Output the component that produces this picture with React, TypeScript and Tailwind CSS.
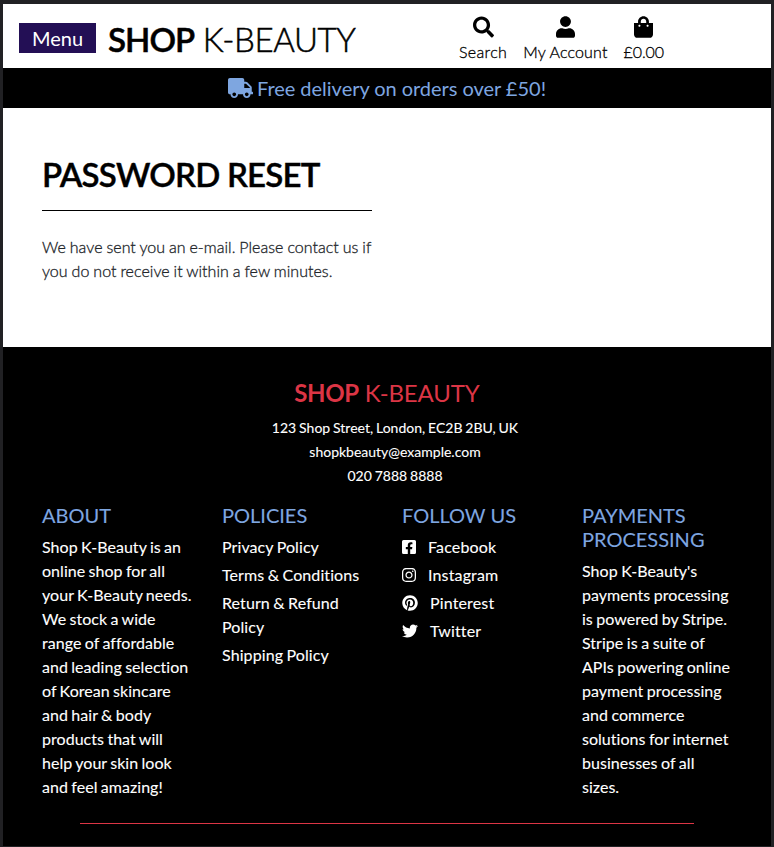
import { FaSearch, FaUser, FaShoppingBag, FaTruck, FaFacebookSquare, FaInstagram, FaPinterest, FaTwitter } from "react-icons/fa";

const policies = ["Privacy Policy", "Terms & Conditions", "Return & Refund Policy", "Shipping Policy"];
const socials = [
  { icon: FaFacebookSquare, label: "Facebook", cls: "w-[14px] mr-3" },
  { icon: FaInstagram, label: "Instagram", cls: "w-[14px] mr-3" },
  { icon: FaPinterest, label: "Pinterest", cls: "w-4 mr-3" },
  { icon: FaTwitter, label: "Twitter", cls: "w-4 mr-3" },
];
const actions = [
  { icon: FaSearch, label: "Search", cls: "w-[21px]", text: "tracking-[0.35px]" },
  { icon: FaUser, label: "My Account", cls: "w-[19px]", text: "tracking-[0.16px]" },
  { icon: FaShoppingBag, label: "£0.00", cls: "w-[19px]", text: "tracking-[-0.1px]" },
];

function Heading({ children }: { children: string }) {
  return <h2 className="mb-2 text-[20px] leading-6 text-[#7ea6e0]">{children}</h2>;
}

export default function App() {
  return (
    <div className="h-[847px] overflow-hidden border-x-[3px] border-t-[4px] border-b border-[#212124] bg-white font-['Lato',sans-serif] text-base leading-6 text-black [font-variant-ligatures:none]">
      <header className="flex h-16 items-start pl-4">
        <button className="mt-[19px] h-[30px] w-[77px] bg-[#230f55] text-[20px] leading-[30px] text-white">Menu</button>
        <h1 className="mt-[15px] ml-3 w-[351px] text-[33px] leading-10 font-light tracking-[-0.4px] whitespace-nowrap [-webkit-text-stroke:0.5px_black]"><b className="font-semibold tracking-[-0.95px]">SHOP</b> K-BEAUTY</h1>
        <nav className="mt-[12px] flex gap-4 font-light [-webkit-text-stroke:0.3px_black]">
          {actions.map(({ icon: Icon, label, cls, text }) => (
            <a key={label} className="flex flex-col items-center">
              <Icon className={`h-[22px] ${cls}`} />
              <span className={`mt-[2px] ${text}`}>{label}</span>
            </a>
          ))}
        </nav>
      </header>
      <div className="flex h-10 items-center justify-center bg-black text-[20px] text-[#7ea6e0]">
        <FaTruck className="mr-1 h-5 w-[25px]" /><span className="[word-spacing:-0.2px]">Free delivery on orders over £50!</span>
      </div>
      <main className="h-[239px] pt-[46px] pl-[39px]">
        <h2 className="text-[33px] leading-10 font-semibold tracking-[-0.77px] [-webkit-text-stroke:0.4px_black]">PASSWORD RESET</h2>
        <hr className="mt-4 mb-6 w-[330px] border-black" />
        <p className="font-light tracking-[0.03px] text-[#212529] [word-spacing:-0.45px] [-webkit-text-stroke:0.3px_#212529]">We have sent you an e-mail. Please contact us if<br />you do not receive it within a few minutes.</p>
      </main>
      <footer className="h-[499px] bg-black pt-[31px] text-white">
        <h2 className="text-center text-[24px] leading-[30px] tracking-[-0.15px] text-[#dc3545]"><b className="tracking-[-0.4px]">SHOP</b> K-BEAUTY</h2>
        <address className="mt-2 pl-4 text-center text-sm leading-6 not-italic [word-spacing:-0.7px] [-webkit-text-stroke:0.1px]">
          123 Shop Street, London, EC2B 2BU, UK<br />shopkbeauty@example.com<br />020 7888 8888
        </address>
        <div className="mt-[15px] grid grid-cols-4 gap-[30px] px-[39px] [-webkit-text-stroke:0.1px]">
          <section><Heading>ABOUT</Heading><p className="tracking-[0.04px] whitespace-nowrap [word-spacing:-0.8px]">Shop K-Beauty is an<br />online shop for all<br />your K-Beauty needs.<br />We stock a wide<br />range of affordable<br />and leading selection<br />of Korean skincare<br />and hair &amp; body<br />products that will<br />help your skin look<br />and feel amazing!</p></section>
          <section><Heading>POLICIES</Heading><ul className="space-y-1 tracking-[0.09px] [word-spacing:-0.8px]">{policies.map((p) => <li key={p}>{p}</li>)}</ul></section>
          <section><Heading>FOLLOW US</Heading><ul className="space-y-1 tracking-[0.15px]">{socials.map(({ icon: Icon, label, cls }) => <li key={label} className="flex items-center"><Icon className={`h-4 ${cls}`} />{label}</li>)}</ul></section>
          <section><Heading>PAYMENTS PROCESSING</Heading><p className="tracking-[0.03px] [word-spacing:-0.6px]">Shop K-Beauty's<br />payments processing<br />is powered by Stripe.<br />Stripe is a suite of<br />APIs powering online<br />payment processing<br />and commerce<br />solutions for internet<br />businesses of all<br />sizes.</p></section>
        </div>
        <hr className="mx-auto mt-6 w-[614px] border-[#dc3545]" />
      </footer>
    </div>
  );
}
